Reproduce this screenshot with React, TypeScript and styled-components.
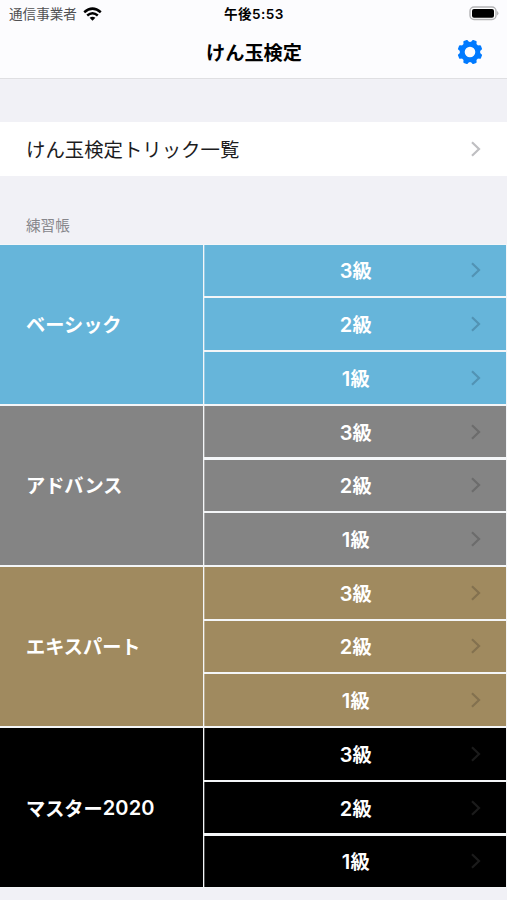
import React from "react";
import styled, { createGlobalStyle } from "styled-components";

const GlobalStyle = createGlobalStyle`
  * { box-sizing: border-box; }
  body {
    margin: 0;
    background: #f1f1f6;
    color: #000;
    font-family: Inter, "Noto Sans CJK JP", sans-serif;
    overflow: hidden;
  }
`;

const Screen = styled.div`
  width: 507px;
  height: 900px;
  overflow: hidden;
  background: #f1f1f6;
`;

const Header = styled.header`
  height: 79px;
  background: #fcfcfe;
  border-bottom: 1px solid #dfdfe2;
`;

const StatusBar = styled.div`
  display: grid;
  grid-template-columns: 1fr auto 1fr;
  align-items: center;
  height: 27px;
  padding: 0 8px 0 9px;
`;

const Carrier = styled.div`
  display: flex;
  align-items: center;
  gap: 6px;
  font-size: 13.6px;
  line-height: 20px;
  color: #505052;
`;

const Clock = styled.div`
  font-size: 13.6px;
  line-height: 20px;
  font-weight: 600;
  letter-spacing: 0.45px;
`;

const Battery = styled.svg`
  justify-self: end;
  display: block;
`;

const NavBar = styled.div`
  display: grid;
  grid-template-columns: 1fr auto 1fr;
  align-items: center;
  height: 50px;
  padding: 0 24px 0 25px;
`;

const Title = styled.h1`
  grid-column: 2;
  margin: 0;
  padding-top: 1px;
  font-size: 19.2px;
  line-height: 28px;
  font-weight: 600;
`;

const SettingsButton = styled.button`
  justify-self: end;
  display: block;
  width: 26px;
  height: 26px;
  padding: 0;
  border: 0;
  background: none;
`;

const ListRow = styled.div`
  display: flex;
  align-items: center;
  justify-content: space-between;
  height: 54px;
  margin-top: 43px;
  padding: 0 26px;
  background: #fff;
  font-size: 19.4px;
  color: #1c1c1e;

  span { padding-bottom: 2px; }
`;

const SectionTitle = styled.h2`
  height: 68px;
  margin: 0;
  padding: 39px 26px 0;
  font-size: 14.6px;
  line-height: 22px;
  font-weight: 400;
  color: #86868b;
`;

const Levels = styled.div`
  display: flex;
  flex-direction: column;
  gap: 2.2px;
  width: 507px;
  padding: 0.6px 1px 1px 0;
  background: #f4f6f8;
`;

const Level = styled.section<{ $color: string }>`
  --cell: ${(p) => p.$color};
  display: grid;
  grid-template-columns: 203.4px 1fr;
  height: 159px;
`;

const LevelName = styled.div`
  display: flex;
  align-items: center;
  padding-left: 26px;
  background: var(--cell);
  color: #fff;
  font-size: 19.2px;
  font-weight: 600;
`;

const Digits = styled.span`
  font-size: 20px;
  letter-spacing: 0.15px;
`;

const Grades = styled.div`
  display: grid;
  grid-template-rows: repeat(3, 1fr);
  row-gap: 2.2px;
  border-left: 1px solid #f4f6f8;
`;

const Grade = styled.div`
  display: grid;
  grid-template-columns: 1fr auto 1fr;
  align-items: center;
  padding: 0 25px 0 26px;
  background: var(--cell);
  box-shadow: inset 1px 0 rgba(255, 255, 255, 0.3);
  color: #fff;
  font-size: 19.2px;
  font-weight: 600;

  svg { justify-self: end; }
`;

const GradeName = styled.div`
  grid-column: 2;
`;

const ChevronIcon = styled.svg<{ $color: string }>`
  display: block;
  fill: none;
  stroke: ${(p) => p.$color};
  stroke-width: 2.2;
`;

const Chevron = ({ color }: { color: string }) => (
  <ChevronIcon $color={color} width="10" height="16" viewBox="0 0 10 16">
    <path d="M1 1.3 8 8 1 14.7" />
  </ChevronIcon>
);

const Wifi = () => (
  <svg width="19" height="14" viewBox="0 0 19 14" fill="none" stroke="#000" strokeWidth="2.5">
    <path d="M1.2 5.2Q9.5-1.9 17.8 5.2" />
    <path d="M4.2 8.5Q9.5 4 14.8 8.5" />
    <path d="M6.6 10.8Q9.5 8.6 12.4 10.8L9.5 13.7Z" fill="#000" stroke="none" />
  </svg>
);

const teeth = Array.from({ length: 8 }, (_, i) => 22.5 + i * 45);

const Gear = () => (
  <svg width="26" height="26" viewBox="-13 -13 26 26" fill="none">
    <circle r="7.8" stroke="#007aff" strokeWidth="5" />
    {teeth.map((angle) => (
      <path
        key={angle}
        d="M-3.2-9 -2.3-11.8Q-2.1-12.4 -1.5-12.4H1.5Q2.1-12.4 2.3-11.8L3.2-9Z"
        fill="#007aff"
        transform={`rotate(${angle})`}
      />
    ))}
  </svg>
);

const levels = [
  { name: "ベーシック", year: "", color: "#66b5da", chevron: "#5293b4" },
  { name: "アドバンス", year: "", color: "#848484", chevron: "#6c6c6c" },
  { name: "エキスパート", year: "", color: "#a08a5f", chevron: "#83714f" },
  { name: "マスター", year: "2020", color: "#000000", chevron: "#1b1b1b" },
];

const grades = [3, 2, 1];

export default function App() {
  return (
    <Screen>
      <GlobalStyle />
      <Header>
        <StatusBar>
          <Carrier>
            通信事業者
            <Wifi />
          </Carrier>
          <Clock>午後5:53</Clock>
          <Battery width="31" height="15" viewBox="0 0 31 15">
            <rect x="2" y="1" width="26" height="12.5" rx="4" fill="#fff" stroke="#b3b3b5" strokeWidth="1.4" />
            <rect x="4" y="2.9" width="22" height="8.8" rx="2" fill="#000" />
            <path d="M29.2 5Q31.5 7.2 29.2 9.5Z" fill="#a8a8aa" />
          </Battery>
        </StatusBar>
        <NavBar>
          <Title>けん玉検定</Title>
          <SettingsButton aria-label="設定">
            <Gear />
          </SettingsButton>
        </NavBar>
      </Header>
      <ListRow>
        <span>けん玉検定トリック一覧</span>
        <Chevron color="#bfbfc2" />
      </ListRow>
      <SectionTitle>練習帳</SectionTitle>
      <Levels>
        {levels.map((level) => (
          <Level key={level.name} $color={level.color}>
            <LevelName>
              {level.name}
              {level.year && <Digits>{level.year}</Digits>}
            </LevelName>
            <Grades>
              {grades.map((grade) => (
                <Grade key={grade}>
                  <GradeName>
                    <Digits>{grade}</Digits>級
                  </GradeName>
                  <Chevron color={level.chevron} />
                </Grade>
              ))}
            </Grades>
          </Level>
        ))}
      </Levels>
    </Screen>
  );
}
